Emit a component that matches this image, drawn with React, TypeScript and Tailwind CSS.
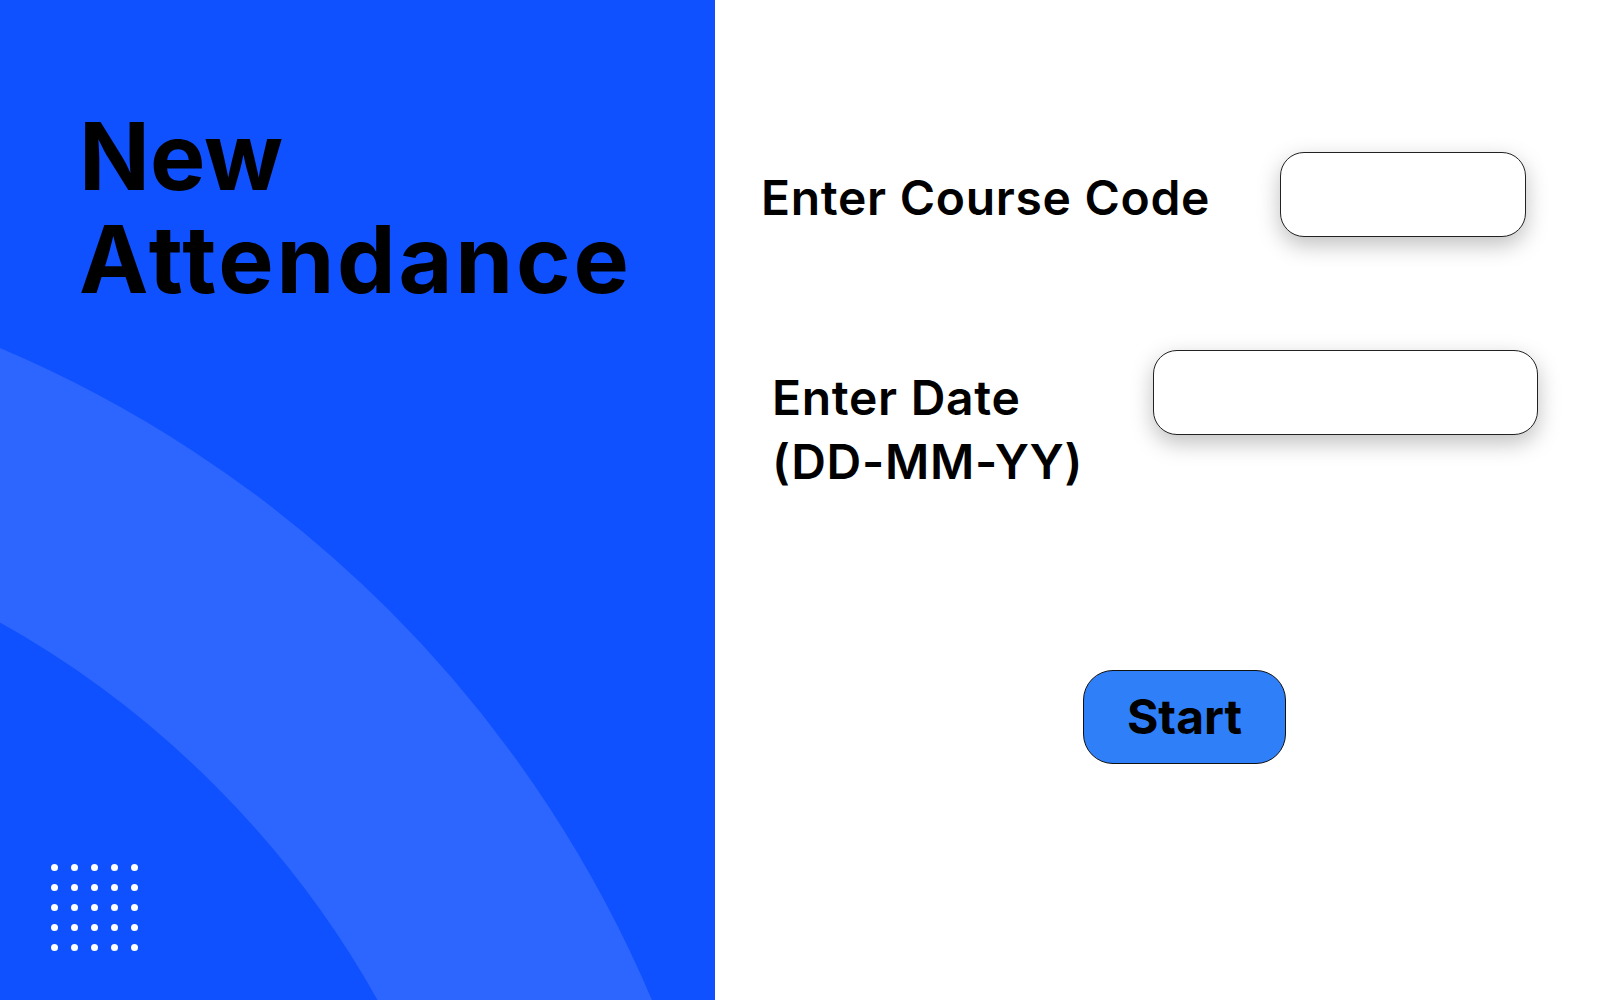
import React from "react";

const dotRows = [0, 1, 2, 3, 4];

function Arc() {
  // wide light-blue ring sweeping up from the bottom-left corner
  return (
    <svg
      className="absolute inset-0 h-full w-full"
      viewBox="0 0 715 1000"
      preserveAspectRatio="none"
      fill="none"
    >
      <circle cx="-480" cy="1480" r="1106" stroke="#2c66ff" strokeWidth="247" />
    </svg>
  );
}

function DotGrid() {
  return (
    <div className="absolute left-[51px] top-[864px] flex flex-col gap-[13px]">
      {dotRows.map((r) => (
        <div key={r} className="flex gap-[13px]">
          {dotRows.map((c) => (
            <span key={c} className="block h-[7px] w-[7px] rounded-full bg-white" />
          ))}
        </div>
      ))}
    </div>
  );
}

export default function App() {
  return (
    <div
      className="flex h-[1000px] w-[1600px] overflow-hidden bg-white text-black"
      style={{ fontFamily: "Inter, 'Noto Sans', sans-serif" }}
    >
      {/* Left hero panel */}
      <div className="relative h-full w-[715px] shrink-0 overflow-hidden bg-[#0f51ff]">
        <Arc />
        <h1 className="relative flex flex-col pl-[79px] pt-[105px] text-[93px] font-bold leading-[103px]">
          <span>New</span>
          <span className="tracking-[2.8px]">Attendance</span>
        </h1>
        <DotGrid />
      </div>

      {/* Form */}
      <div className="flex flex-1 flex-col">
        <div className="mt-[152px] flex items-center justify-between pl-[46px] pr-[74px]">
          <label className="mt-[7px] text-[48px] font-semibold leading-[64px] tracking-[0.7px]">
            Enter Course Code
          </label>
          <input
            type="text"
            className="h-[85px] w-[246px] rounded-[24px] border border-[#222] bg-white shadow-[0_8px_22px_rgba(0,0,0,0.25)] outline-none"
          />
        </div>

        <div className="mt-[113px] flex items-start justify-between pl-[57px] pr-[62px]">
          <label className="mt-[16px] text-[48px] font-semibold leading-[64px] tracking-[0.7px]">
            Enter Date
            <br />
            (DD-MM-YY)
          </label>
          <input
            type="text"
            className="h-[85px] w-[385px] rounded-[24px] border border-[#222] bg-white shadow-[0_8px_22px_rgba(0,0,0,0.25)] outline-none"
          />
        </div>

        <button className="ml-[368px] mt-[176px] flex h-[94px] w-[203px] items-center justify-center rounded-[30px] border border-[#111] bg-[#2f7ff8] text-[48px] font-bold">
          Start
        </button>
      </div>
    </div>
  );
}
